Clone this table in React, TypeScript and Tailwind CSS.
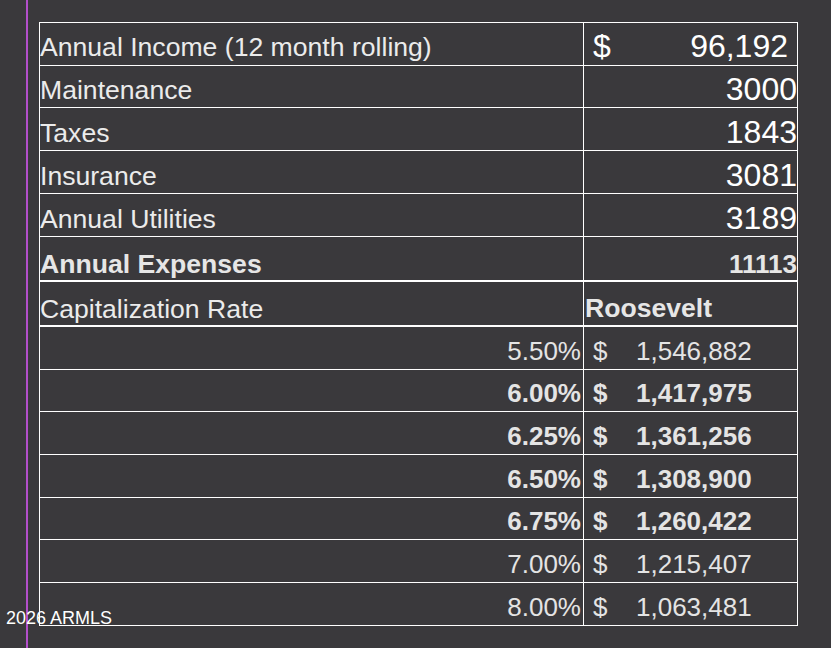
const font = { fontFamily: '"Liberation Sans", Arial, sans-serif' };

type Simple = { label: string; value: string; h: string };

const simpleRows: Simple[] = [
  { label: "Maintenance", value: "3000", h: "h-[42px]" },
  { label: "Taxes", value: "1843", h: "h-[43px]" },
  { label: "Insurance", value: "3081", h: "h-[43px]" },
  { label: "Annual Utilities", value: "3189", h: "h-[43px]" },
];

const rates = [
  { rate: "5.50%", value: "1,546,882", bold: false, h: "h-[43px]" },
  { rate: "6.00%", value: "1,417,975", bold: true, h: "h-[42px]" },
  { rate: "6.25%", value: "1,361,256", bold: true, h: "h-[43px]" },
  { rate: "6.50%", value: "1,308,900", bold: true, h: "h-[43px]" },
  { rate: "6.75%", value: "1,260,422", bold: true, h: "h-[42px]" },
  { rate: "7.00%", value: "1,215,407", bold: false, h: "h-[43px]" },
  { rate: "8.00%", value: "1,063,481", bold: false, h: "h-[42px]" },
];

export default function App() {
  return (
    <div className="relative flex h-[648px] w-[831px] overflow-hidden bg-[#3a393c]" style={font}>
      <div className="w-[26px] shrink-0" />
      <div className="w-[2px] shrink-0 bg-[#b34fcb]" />
      <div className="w-[11px] shrink-0" />

      <div className="mt-[22px] w-[759px] self-start border border-white">
        {/* income */}
        <div className="grid h-[43px] grid-cols-[544px_213px] border-b border-white">
          <div className="flex items-end border-r border-white pb-[4px] text-[26.6px] leading-none text-[#ebebeb]">
            Annual Income (12 month rolling)
          </div>
          <div className="flex items-end justify-between pb-[3px] pl-[9px] pr-[9px] text-[32px] leading-none text-white">
            <span>$</span>
            <span>96,192</span>
          </div>
        </div>

        {simpleRows.map((r) => (
          <div key={r.label} className={`grid ${r.h} grid-cols-[544px_213px] border-b border-white`}>
            <div className="flex items-end border-r border-white pb-[3px] text-[26.6px] leading-none text-[#ebebeb]">
              {r.label}
            </div>
            <div className="flex items-end justify-end pb-[2px] text-[32px] leading-none text-white">
              {r.value}
            </div>
          </div>
        ))}

        {/* expenses */}
        <div className="grid h-[45px] grid-cols-[544px_213px] border-b-2 border-white">
          <div className="flex items-end border-r border-white pb-[2px] text-[26.6px] font-bold leading-none text-[#e6e6e6]">
            Annual Expenses
          </div>
          <div className="flex items-end justify-end pb-[3px] text-[26px] font-bold leading-none text-[#e6e6e6]">
            11113
          </div>
        </div>

        <div className="grid h-[45px] grid-cols-[544px_213px] border-b-2 border-white">
          <div className="flex items-end border-r border-white pb-[2px] text-[26.6px] leading-none text-[#ebebeb]">
            Capitalization Rate
          </div>
          <div className="flex items-end pb-[3px] pl-px text-[26.6px] font-bold leading-none text-[#e6e6e6]">
            Roosevelt
          </div>
        </div>

        {rates.map((r, i) => (
          <div
            key={r.rate}
            className={`grid ${r.h} grid-cols-[544px_213px] ${i < rates.length - 1 ? "border-b border-white" : ""} text-[26px] leading-none text-[#e4e4e4] ${r.bold ? "font-bold" : ""}`}
          >
            <div className="flex items-end justify-end border-r border-white pb-[5px] pr-[2px]">{r.rate}</div>
            <div className="flex items-end pb-[5px] pl-[9px]">
              <span className="w-[43px]">$</span>
              <span>{r.value}</span>
            </div>
          </div>
        ))}
      </div>

      <div className="absolute left-[6px] top-[609px] text-[18px] leading-none text-white">2026 ARMLS</div>
    </div>
  );
}
